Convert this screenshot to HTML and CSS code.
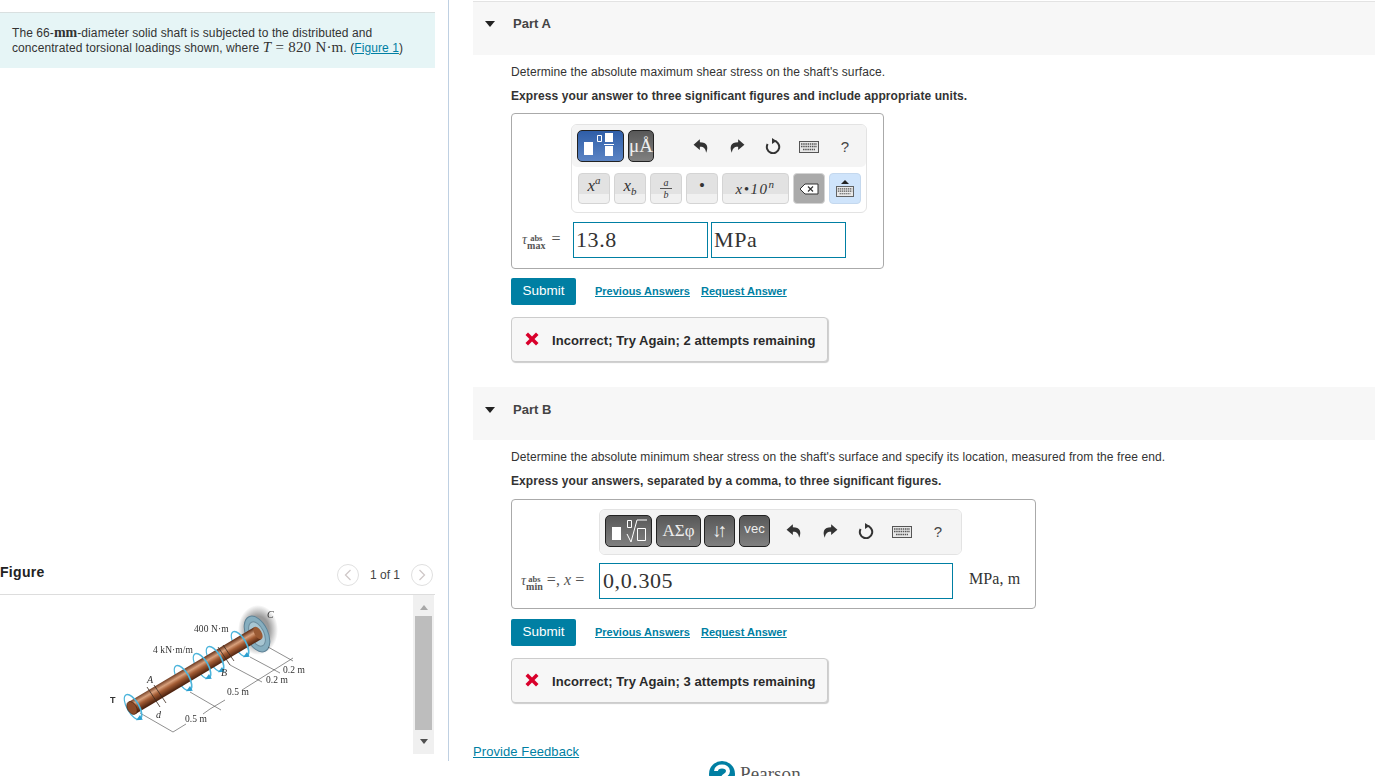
FILE: index.html
```html
<!DOCTYPE html>
<html>
<head>
	<title>Part A and Part B</title>
	<link rel="stylesheet" href="styles.css">
</head>
<body>
<svg class="defs" width="0" height="0">
	<symbol id="undo" viewBox="0 0 14 14"><path d="M6 1 L0.5 6 L6 10.5 L6 7.6 C9 7.4 11 8.8 11.5 13 C13.8 8 12.5 3.8 6 3.8 Z"/></symbol>
	<symbol id="redo" viewBox="0 0 14 14"><path d="M8 1 L13.5 6 L8 10.5 L8 7.6 C5 7.4 3 8.8 2.500 13 C0.2 8 1.500 3.8 8 3.800 Z"/></symbol>
	<symbol id="reset" viewBox="0 0 16 16"><path d="M8.500 2.800 A6.200 6.200 0 1 1 2.600 6" fill="none" stroke="#333" stroke-width="2"/><path d="M7 0 L11.500 3 L7 6 Z"/></symbol>
	<symbol id="keys" viewBox="0 0 20 12"><rect x=".5" y=".5" width="19" height="11" fill="#e8e8e8" stroke="#555"/><path d="M2 3h16M2 5.500h16M4 8.500h12" stroke="#555" stroke-width="1.300" stroke-dasharray="1.500 .7"/></symbol>
	<symbol id="cross" viewBox="0 0 14 14"><path d="M3 0.500 L7 4.500 L11 0.500 L13.500 3 L9.500 7 L13.500 11 L11 13.500 L7 9.500 L3 13.500 L0.500 11 L4.500 7 L0.500 3 Z"/></symbol>
</svg>

<div class="page">
	<div class="left">
		<div class="intro">
			The 66-<span class="math">mm</span>-diameter solid shaft is subjected to the distributed and
			concentrated torsional loadings shown, where <span class="math big"><i>T</i> = 820 N·m</span>. (<a href="#">Figure 1</a>)
		</div>

		<div class="figure-head">
			<b class="figure-title">Figure</b>
			<div class="pager">
				<span class="round"><svg width="8" height="12" viewBox="0 0 8 12"><path d="M6.500 1 L1.500 6 L6.500 11" fill="none" stroke="#cfc8c8" stroke-width="1.300"/></svg></span>
				<span>1 of 1</span>
				<span class="round"><svg width="8" height="12" viewBox="0 0 8 12"><path d="M1.500 1 L6.500 6 L1.500 11" fill="none" stroke="#cfc8c8" stroke-width="1.300"/></svg></span>
			</div>
		</div>

		<div class="figure-body">
			<svg class="shaft" width="230" height="150" viewBox="0 0 230 150">
				<defs>
					<linearGradient id="steel" gradientUnits="userSpaceOnUse" x1="101.500" y1="69" x2="108.500" y2="81">
						<stop offset="0" stop-color="#5f2c14"/>
						<stop offset=".35" stop-color="#d8a07c"/>
						<stop offset=".6" stop-color="#a35c34"/>
						<stop offset="1" stop-color="#4f2410"/>
					</linearGradient>
					<radialGradient id="wall"><stop offset=".55" stop-color="#9a9a9a"/><stop offset="1" stop-color="#fff"/></radialGradient>
					<path id="loop-back" d="M0 -14 A6 14 0 0 0 0 14" fill="none" stroke="#4db5dc" stroke-width="1.200"/>
					<g id="loop-front">
						<path d="M0 -14 A6 14 0 0 1 0 14" fill="none" stroke="#4db5dc" stroke-width="1.600"/>
						<path d="M-4 13 L2 10.500 L2 16 Z" fill="#2a9fd0"/>
					</g>
				</defs>
				<ellipse cx="168" cy="35" rx="20" ry="25" fill="url(#wall)"/>
				<g transform="translate(167 39) rotate(-25)">
					<ellipse rx="11" ry="19" fill="#86aebf" stroke="#5d8296"/>
					<ellipse rx="7" ry="13" fill="#a8c6d2" stroke="#6c8c9c"/>
				</g>
				<g fill="none" stroke="#444" stroke-width=".6">
					<path d="M50 118 L83 137 L96 129 M113 119 L120 114 L135 105 M152 95 L203 63"/>
					<path d="M100 97 L131 115 M140 70 L172 87 M160 62 L190 78 M178 52 L203 66"/>
				</g>
				<g transform="translate(43 112) rotate(-30)"><use href="#loop-back"/></g>
				<g transform="translate(93 83) rotate(-30)"><use href="#loop-back"/></g>
				<g transform="translate(112 71) rotate(-30)"><use href="#loop-back"/></g>
				<g transform="translate(125 64) rotate(-30)"><use href="#loop-back"/></g>
				<g transform="translate(150 49) rotate(-30)"><use href="#loop-back"/></g>
				<path d="M38.500 107 L164.500 32 L171.500 44 L45.500 119 Z" fill="url(#steel)"/>
				<ellipse cx="42" cy="113" rx="4.500" ry="7" transform="rotate(-30 42 113)" fill="#8a4a28" stroke="#3f1e0c" stroke-width=".6"/>
				<ellipse cx="168" cy="38" rx="3.500" ry="7" transform="rotate(-30 168 38)" fill="#9a5a34"/>
				<path d="M57 92 L70 112 M64 90 L76 108 M128 52 L140 70 M133 50 L144 66" stroke="#3a2a20" stroke-width=".8"/>
				<g transform="translate(43 112) rotate(-30)"><use href="#loop-front"/></g>
				<g transform="translate(93 83) rotate(-30)"><use href="#loop-front"/></g>
				<g transform="translate(112 71) rotate(-30)"><use href="#loop-front"/></g>
				<g transform="translate(125 64) rotate(-30)"><use href="#loop-front"/></g>
				<g transform="translate(150 49) rotate(-30)"><use href="#loop-front"/></g>
				<g class="fig-label">
					<text x="104" y="37">400 N·m</text>
					<text x="63" y="58">4 kN·m/m</text>
					<text x="193" y="78">0.2 m</text>
					<text x="176" y="88">0.2 m</text>
					<text x="137" y="100">0.5 m</text>
					<text x="95" y="127">0.5 m</text>
					<text class="it" x="177" y="23">C</text>
					<text class="it" x="57" y="88">A</text>
					<text class="it" x="131" y="81">B</text>
					<text class="it" x="66" y="123">d</text>
					<text class="bd" x="20" y="108">T</text>
				</g>
			</svg>
			<div class="scrollbar">
				<span class="arrow up"></span>
				<div class="thumb"></div>
				<span class="arrow down"></span>
			</div>
		</div>
	</div>

	<div class="right">
		<section class="part">
			<div class="part-head"><span class="caret"></span>Part A</div>
			<div class="part-body">
				<p class="question">Determine the absolute maximum shear stress on the shaft's surface.</p>
				<p class="instruction">Express your answer to three significant figures and include appropriate units.</p>

				<div class="answer answer-a">
					<div class="toolbar toolbar-a">
						<div class="tool-row">
							<span class="tool blue templates">
								<svg width="45" height="30" viewBox="0 0 45 30"><path fill="#fff" d="M6 11h9v13H6zM27 2h8v9h-8zM27 15h8v10h-8zM26 13h10v1H26z"/><path fill="none" stroke="#fff" d="M19.500 4.500h4v6h-4z"/></svg>
							</span>
							<span class="tool dark units">μÅ</span>
							<span class="actions actions-a">
								<svg class="ic"><use href="#undo"/></svg>
								<svg class="ic"><use href="#redo"/></svg>
								<svg class="ic"><use href="#reset"/></svg>
								<svg class="ic kb"><use href="#keys"/></svg>
								<span class="help">?</span>
							</span>
						</div>
						<div class="key-row">
							<span class="key k-sq"><i>x<sup>a</sup></i></span>
							<span class="key k-sq"><i>x<sub>b</sub></i></span>
							<span class="key k-sq frac"><i>a</i><i>b</i></span>
							<span class="key k-sq">•</span>
							<span class="key k-wide"><i>x•10<sup>n</sup></i></span>
							<span class="key k-sq k-del">
								<svg width="20" height="12" viewBox="0 0 20 12"><path d="M1 6 L6 1 H19 V11 H6 Z" fill="#fff" stroke="#333"/><path d="M9 3.500l5 5M14 3.500l-5 5" stroke="#333" stroke-width="1.200"/></svg>
							</span>
							<span class="key k-sq k-open">
								<span class="tri"></span>
								<svg width="18" height="11"><use href="#keys"/></svg>
							</span>
						</div>
					</div>
					<div class="entry-row">
						<span class="math-label label-a"><i>τ</i><span class="stack"><small>abs</small><small class="low">max</small></span><span class="eq">=</span></span>
						<span class="entry entry-num">13.8</span>
						<span class="entry entry-unit">MPa</span>
					</div>
				</div>

				<div class="submit-row">
					<a class="submit">Submit</a>
					<a class="small-link" href="#">Previous Answers</a>
					<a class="small-link" href="#">Request Answer</a>
				</div>
				<div class="feedback"><svg class="cross"><use href="#cross"/></svg>Incorrect; Try Again; 2 attempts remaining</div>
			</div>
		</section>

		<section class="part part-second">
			<div class="part-head"><span class="caret"></span>Part B</div>
			<div class="part-body">
				<p class="question">Determine the absolute minimum shear stress on the shaft's surface and specify its location, measured from the free end.</p>
				<p class="instruction">Express your answers, separated by a comma, to three significant figures.</p>

				<div class="answer answer-b">
					<div class="toolbar toolbar-b">
						<div class="tool-row">
							<span class="tool dark t-root">
								<svg width="45" height="31" viewBox="0 0 45 31"><path fill="#fff" d="M6 11h9v13H6z"/><path fill="none" stroke="#fff" d="M21 18l4 8 6-22h10M31.500 12.500h8v12h-8zM21.500 4.500h4v7h-4z"/></svg>
							</span>
							<span class="tool dark t-greek">ΑΣφ</span>
							<span class="tool dark t-arrows">↓↑</span>
							<span class="tool dark t-vec">vec</span>
							<span class="actions actions-b">
								<svg class="ic"><use href="#undo"/></svg>
								<svg class="ic"><use href="#redo"/></svg>
								<svg class="ic"><use href="#reset"/></svg>
								<svg class="ic kb"><use href="#keys"/></svg>
								<span class="help">?</span>
							</span>
						</div>
					</div>
					<div class="entry-row">
						<span class="math-label label-b"><i>τ</i><span class="stack"><small>abs</small><small class="low">min</small></span><span class="eq">=, <i>x</i> =</span></span>
						<span class="entry entry-long">0,0.305</span>
						<span class="units-text">MPa, m</span>
					</div>
				</div>

				<div class="submit-row">
					<a class="submit">Submit</a>
					<a class="small-link" href="#">Previous Answers</a>
					<a class="small-link" href="#">Request Answer</a>
				</div>
				<div class="feedback"><svg class="cross"><use href="#cross"/></svg>Incorrect; Try Again; 3 attempts remaining</div>
			</div>
		</section>

		<a class="provide" href="#">Provide Feedback</a>
		<div class="pearson">
			<svg width="26" height="26" viewBox="0 0 26 26"><circle cx="13" cy="13" r="13" fill="#007fa3"/><path d="M7 10 C7 4 19 4 19 10 C19 15 13 14 13 19" fill="none" stroke="#fff" stroke-width="4"/></svg>
			<span>Pearson</span>
		</div>
	</div>
</div>
</body>
</html>
```

FILE: styles.css
```css
html, body {
	margin: 0;
	height: 776px;
	overflow: hidden;
	background-color: #fff;
}

body {
	font-family: "Liberation Sans", Arial, sans-serif;
	font-size: 12px;
	letter-spacing: .085px;
	color: #333;
}

a {
	color: #007fa3;
}

.defs {
	display: block;
	height: 0;
}

.page {
	display: flex;
	align-items: flex-start;
}

/* left column */
.left {
	width: 449px;
	height: 761px;
	flex-shrink: 0;
	box-sizing: border-box;
	padding-top: 12px;
	border-right: 1px solid #bfd0e2;
}

.intro {
	width: 435px;
	height: 56px;
	box-sizing: border-box;
	padding: 13px 12px 0;
	line-height: 15px;
	background-color: #e6f5f6;
	border-top: 1px solid #d9e0e0;
}

.math {
	font-family: "Liberation Serif", serif;
	font-size: 14px;
	font-weight: bold;
	line-height: 0;
	letter-spacing: 0;
}

.big {
	font-size: 15px;
	font-weight: normal;
	letter-spacing: .1px;
	word-spacing: .5px;
}

.figure-head {
	width: 435px;
	height: 39px;
	margin-top: 488px;
	padding-right: 2px;
	box-sizing: border-box;
	display: flex;
	align-items: center;
	justify-content: space-between;
	border-bottom: 1px solid #ddd;
	font-size: 14px;
	color: #222;
}

.figure-title {
	padding-bottom: 6px;
	letter-spacing: .3px;
}

.pager {
	display: flex;
	align-items: center;
	gap: 11px;
	font-size: 12px;
	letter-spacing: 0;
	color: #444;
}

.round {
	width: 22px;
	height: 22px;
	box-sizing: border-box;
	display: flex;
	align-items: center;
	justify-content: center;
	border: 1px solid #e0e0e0;
	border-radius: 50%;
}

.figure-body {
	width: 434px;
	display: flex;
	align-items: flex-start;
	justify-content: space-between;
}

.shaft {
	margin-left: 90px;
	filter: blur(.4px);
}

.fig-label text {
	font-family: "Liberation Serif", serif;
	font-size: 9.500px;
	fill: #333;
}

.fig-label .it {
	font-style: italic;
	font-size: 10px;
}

.fig-label .bd {
	font-family: "Liberation Sans", sans-serif;
	font-weight: bold;
	font-size: 9px;
}

.scrollbar {
	width: 21px;
	height: 159px;
	display: flex;
	flex-direction: column;
	align-items: center;
	background-color: #f0f0f0;
}

.thumb {
	width: 17px;
	height: 114px;
	margin: 6px 0 9px;
	background-color: #bdbdbd;
}

.arrow {
	width: 0;
	height: 0;
	border-left: 4.500px solid transparent;
	border-right: 4.500px solid transparent;
}

.arrow.up {
	margin-top: 10px;
	border-bottom: 5px solid #a8a8a8;
}

.arrow.down {
	border-top: 5px solid #505050;
}

/* right column */
.right {
	flex: 1;
	padding: 1px 0 0 24px;
	min-width: 0;
}

.part-head {
	height: 54px;
	box-sizing: border-box;
	padding-top: 14px;
	display: flex;
	align-items: flex-start;
	border-top: 1px solid #e3e3e3;
	background-color: #f7f7f7;
	font-size: 13px;
	font-weight: bold;
	line-height: 16px;
	letter-spacing: 0;
	color: #444;
}

.part-second .part-head {
	border-top: none;
	height: 53px;
	padding-top: 15px;
}

.caret {
	width: 0;
	height: 0;
	margin: 5px 18px 0 12px;
	border-left: 5px solid transparent;
	border-right: 5px solid transparent;
	border-top: 6px solid #222;
}

.part-body {
	padding-left: 38px;
}

.question {
	margin: 10px 0 0;
	line-height: 15px;
}

.instruction {
	margin: 9px 0 0;
	line-height: 15px;
	font-weight: bold;
}

.answer {
	box-sizing: border-box;
	border: 1px solid #aaa;
	border-radius: 4px;
	display: flex;
	flex-direction: column;
}

.answer-a {
	width: 373px;
	height: 156px;
	margin-top: 9px;
	padding: 10px 0 0 61px;
}

.answer-b {
	width: 525px;
	height: 110px;
	margin-top: 10px;
	padding: 9px 0 0 87px;
}

.toolbar {
	box-sizing: border-box;
	border: 1px solid #e3e3e3;
	border-radius: 6px;
	background-color: #fff;
}

.toolbar-a {
	width: 296px;
	height: 89px;
	margin-left: -2px;
}

.toolbar-b {
	width: 363px;
	height: 46px;
}

.tool-row {
	height: 42px;
	box-sizing: border-box;
	padding: 5px;
	display: flex;
	align-items: flex-start;
	gap: 4px;
	background-color: #f4f4f4;
	border-radius: 5px;
}

.toolbar-b .tool-row {
	height: 44px;
}

.tool {
	height: 32px;
	box-sizing: border-box;
	display: flex;
	align-items: center;
	justify-content: center;
	border: 1px solid #222;
	border-radius: 5px;
	color: #eee;
	font-family: "Liberation Serif", serif;
	font-size: 17px;
}

.blue {
	width: 47px;
	background: linear-gradient(#2f5ea8, #5b84c4);
}

.dark {
	background: linear-gradient(#585858, #808080);
}

.units {
	width: 32px;
	font-size: 19px;
}

.t-root,
.t-greek {
	width: 47px;
}

.t-arrows {
	width: 32px;
	margin-left: -1px;
	padding-right: 4px;
	font-family: "Liberation Sans", sans-serif;
	font-size: 19px;
	letter-spacing: -4px;
}

.t-vec {
	width: 32px;
	font-family: "Liberation Sans", sans-serif;
	font-size: 13px;
	padding-bottom: 6px;
}

.actions {
	display: flex;
	align-items: center;
	height: 32px;
}

.actions > * {
	width: 36px;
	flex-shrink: 0;
}

.actions-a {
	margin-left: 25px;
}

.actions-b {
	margin-left: 2px;
}

.ic {
	height: 16px;
	fill: #333;
}

.ic.kb {
	height: 12px;
	margin-top: 2px;
}

.help {
	text-align: center;
	font-size: 15px;
	color: #444;
}

.key-row {
	display: flex;
	gap: 4px;
	padding: 6px 0 0 6px;
}

.key {
	height: 31px;
	box-sizing: border-box;
	display: flex;
	align-items: center;
	justify-content: center;
	padding-bottom: 5px;
	border: 1px solid #d4d4d4;
	border-radius: 4px;
	background: linear-gradient(#e2e2e2 68%, #f0f0f0 68%);
	font-family: "Liberation Serif", serif;
	font-size: 17px;
	color: #333;
}

.key sup,
.key sub {
	font-size: 11px;
	line-height: 0;
}

.k-sq {
	width: 32px;
}

.k-wide {
	width: 67px;
	padding: 1px 0 0;
	font-size: 15px;
	letter-spacing: 1.500px;
}

.frac {
	flex-direction: column;
	font-size: 10px;
	line-height: 11px;
	padding-bottom: 0;
}

.frac i:first-child {
	border-bottom: 1px solid #555;
	padding: 0 3px;
}

.k-del {
	background: #aaa;
	padding-bottom: 0;
}

.k-open {
	flex-direction: column;
	gap: 2px;
	padding-bottom: 0;
	background: #cfe4fb;
	border-color: #c4d8ee;
}

.tri {
	width: 0;
	height: 0;
	border-left: 4px solid transparent;
	border-right: 4px solid transparent;
	border-bottom: 4px solid #222;
}

.entry-row {
	display: flex;
	align-items: center;
	margin-top: 9px;
}

.answer-b .entry-row {
	margin-top: 8px;
}

.math-label {
	font-family: "Liberation Serif", serif;
	font-size: 14px;
	color: #555;
	display: flex;
	align-items: center;
	white-space: pre;
	box-sizing: border-box;
	padding-left: 10px;
}

.label-a {
	width: 61px;
	margin-left: -61px;
}

.label-b {
	width: 88px;
	margin-left: -88px;
}

.eq {
	margin-left: 6px;
	margin-top: -2px;
	font-size: 16px;
	word-spacing: 0;
}

.label-b .eq {
	margin-left: 4px;
}

.stack {
	display: flex;
	flex-direction: column;
	align-items: center;
	line-height: 7px;
	margin-top: 4px;
	font-weight: bold;
	letter-spacing: 0;
}

.stack small {
	font-size: 8.500px;
}

.stack .low {
	font-size: 10px;
}

.entry {
	height: 36px;
	box-sizing: border-box;
	padding-left: 2px;
	border: 1px solid #007fa3;
	font-family: "Liberation Serif", serif;
	font-size: 22px;
	letter-spacing: .6px;
	line-height: 34px;
	color: #333;
}

.entry-num,
.entry-unit {
	width: 135px;
}

.entry-unit {
	margin-left: 3px;
}

.entry-long {
	width: 354px;
	padding-left: 3px;
}

.units-text {
	margin-left: 16px;
	margin-bottom: 4px;
	font-family: "Liberation Serif", serif;
	font-size: 16px;
}

.submit-row {
	display: flex;
	align-items: center;
	margin-top: 9px;
}

.part-second .submit-row {
	margin-top: 10px;
}

.submit {
	width: 65px;
	height: 27px;
	box-sizing: border-box;
	padding-bottom: 3px;
	margin-right: 19px;
	display: flex;
	align-items: center;
	justify-content: center;
	background-color: #007fa3;
	border-radius: 2px;
	color: #fff;
	font-size: 13.500px;
	letter-spacing: 0;
}

.small-link {
	margin-right: 11px;
	margin-bottom: 1px;
	font-size: 11px;
	font-weight: bold;
	letter-spacing: 0;
}

.feedback {
	width: 317px;
	height: 45px;
	margin-top: 12px;
	padding: 1px 0 0 13px;
	box-sizing: border-box;
	display: flex;
	align-items: center;
	border: 1px solid #ccc;
	border-radius: 4px;
	background-color: #f7f7f7;
	box-shadow: 1px 1px 1px #ccc;
	font-size: 13px;
	font-weight: bold;
	letter-spacing: .06px;
	color: #2a2a2a;
}

.cross {
	width: 14px;
	height: 14px;
	margin: -2px 13px 0 0;
	fill: #d9002b;
}

.part-second {
	margin-top: 25px;
}

.provide {
	display: block;
	margin-top: 41px;
	font-size: 13px;
	line-height: 16px;
}

.pearson {
	display: flex;
	align-items: flex-start;
	gap: 5px;
	margin: 1px 0 0 236px;
	font-family: "Liberation Serif", serif;
	font-size: 19px;
	color: #555;
}

.pearson span {
	margin-top: 2px;
}
```
